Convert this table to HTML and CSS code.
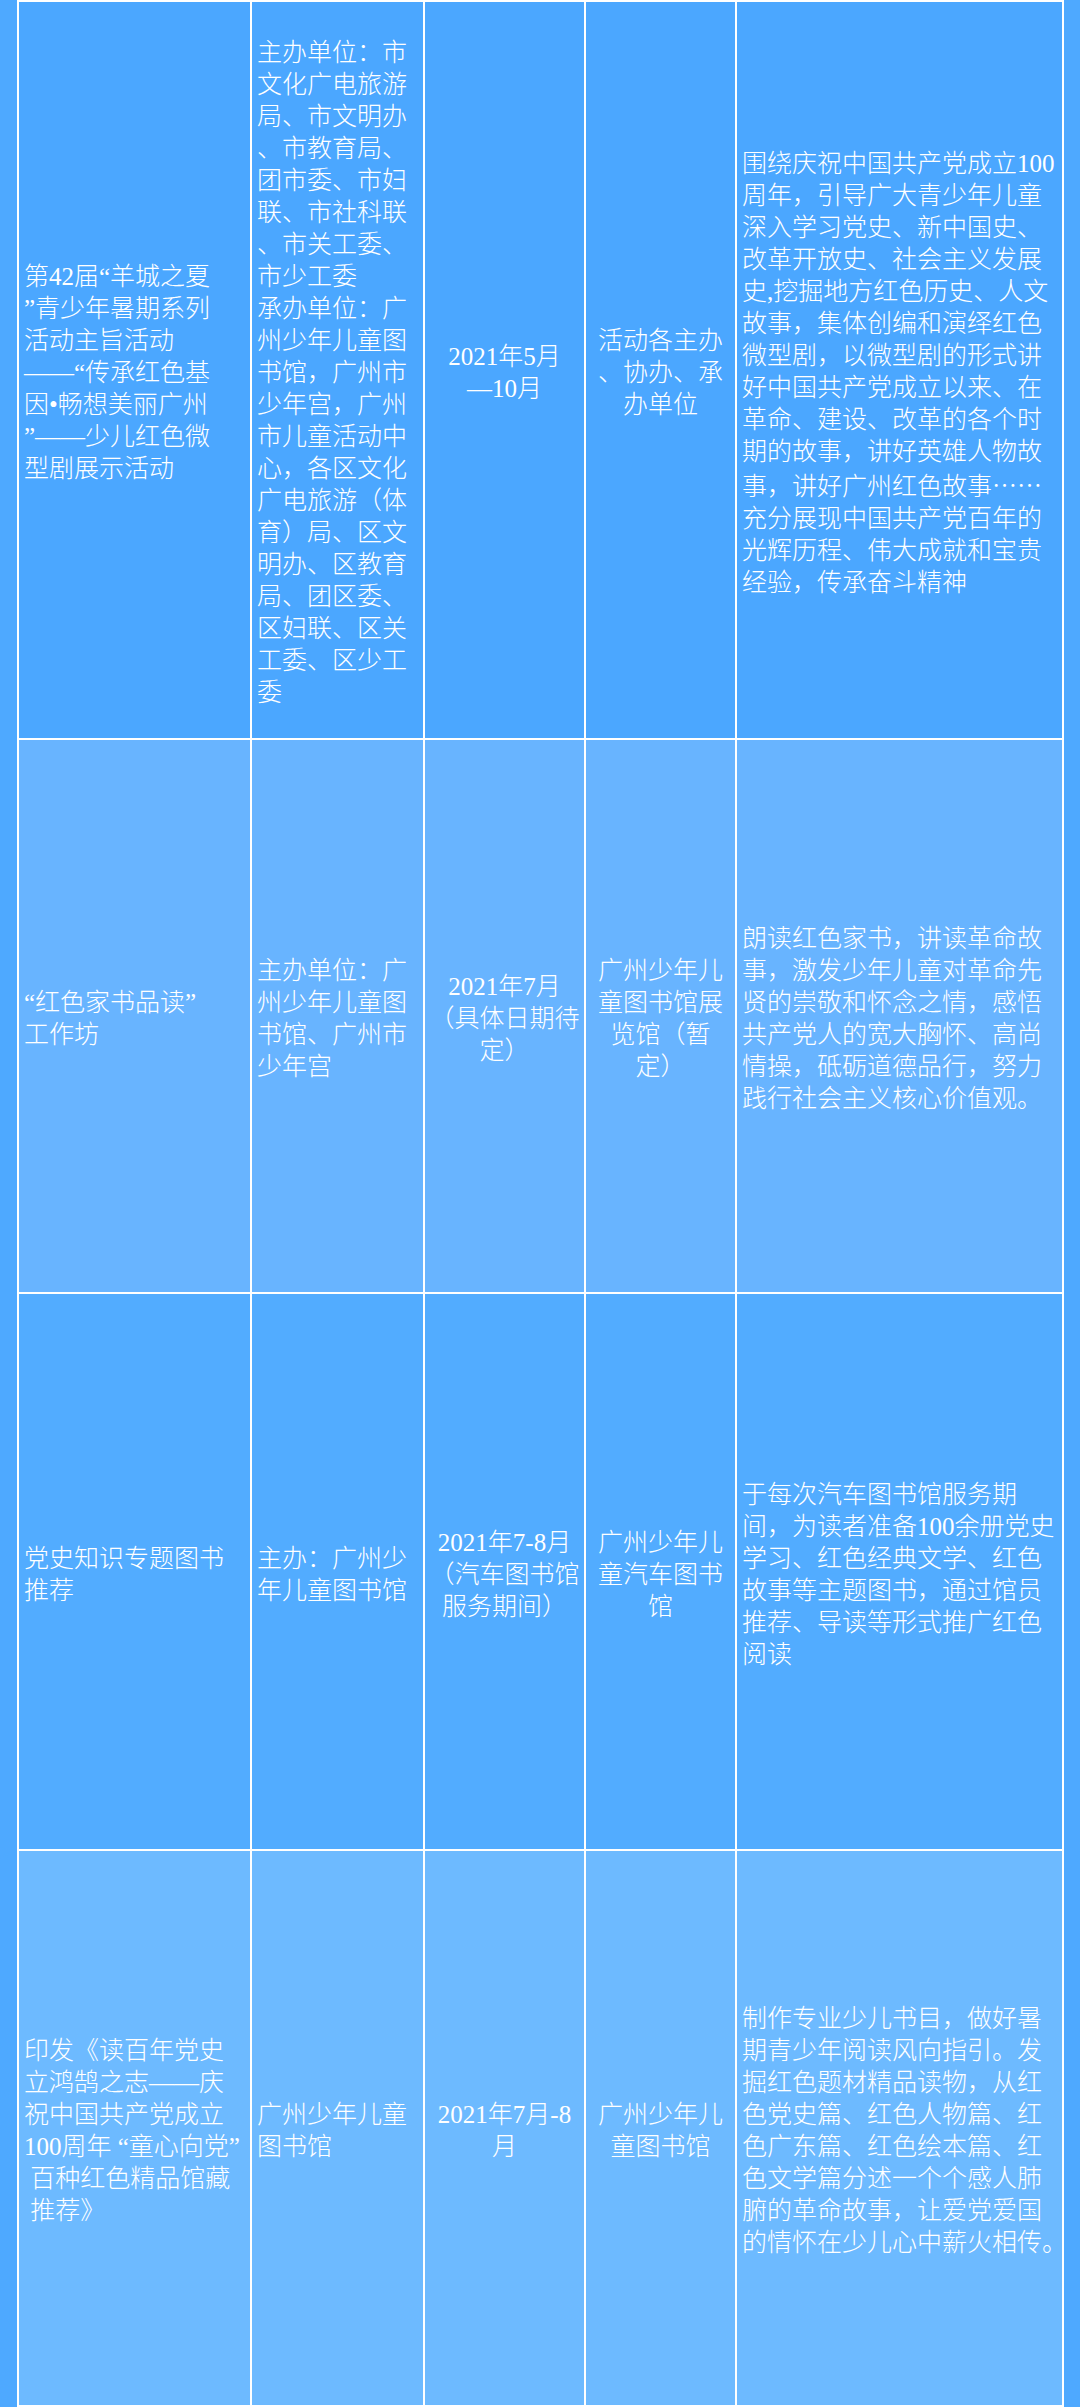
FILE: index.html
```html
<!DOCTYPE html>
<html lang="zh-CN">
<head>
<meta charset="utf-8">
<title>红色主题活动安排</title>
<link rel="stylesheet" href="styles.css">
</head>
<body>
<div class="page">
<table class="plan">
  <colgroup>
    <col class="c-name">
    <col class="c-org">
    <col class="c-time">
    <col class="c-place">
    <col class="c-desc">
  </colgroup>
  <tbody>
    <tr class="row row-1">
      <td class="left">第42届“羊城之夏<br>”青少年暑期系列<br>活动主旨活动<br>——“传承红色基<br>因•畅想美丽广州<br>”——少儿红色微<br>型剧展示活动</td>
      <td class="left">主办单位：市<br>文化广电旅游<br>局、市文明办<br>、市教育局、<br>团市委、市妇<br>联、市社科联<br>、市关工委、<br>市少工委<br>承办单位：广<br>州少年儿童图<br>书馆，广州市<br>少年宫，广州<br>市儿童活动中<br>心，各区文化<br>广电旅游（体<br>育）局、区文<br>明办、区教育<br>局、团区委、<br>区妇联、区关<br>工委、区少工<br>委</td>
      <td class="center">2021年5月<br>—10月</td>
      <td class="center">活动各主办<br>、协办、承<br>办单位</td>
      <td class="left">围绕庆祝中国共产党成立100<br>周年，引导广大青少年儿童<br>深入学习党史、新中国史、<br>改革开放史、社会主义发展<br>史,挖掘地方红色历史、人文<br>故事，集体创编和演绎红色<br>微型剧，以微型剧的形式讲<br>好中国共产党成立以来、在<br>革命、建设、改革的各个时<br>期的故事，讲好英雄人物故<br>事，讲好广州红色故事<span class="cjk">……</span><br>充分展现中国共产党百年的<br>光辉历程、伟大成就和宝贵<br>经验，传承奋斗精神</td>
    </tr>
    <tr class="row row-2">
      <td class="left">“红色家书品读”<br>工作坊</td>
      <td class="left">主办单位：广<br>州少年儿童图<br>书馆、广州市<br>少年宫</td>
      <td class="center">2021年7月<br>（具体日期待<br>定）</td>
      <td class="center">广州少年儿<br>童图书馆展<br>览馆（暂<br>定）</td>
      <td class="left">朗读红色家书，讲读革命故<br>事，激发少年儿童对革命先<br>贤的崇敬和怀念之情，感悟<br>共产党人的宽大胸怀、高尚<br>情操，砥砺道德品行，努力<br>践行社会主义核心价值观。</td>
    </tr>
    <tr class="row row-3">
      <td class="left">党史知识专题图书<br>推荐</td>
      <td class="left">主办：广州少<br>年儿童图书馆</td>
      <td class="center">2021年7-8月<br>（汽车图书馆<br>服务期间）</td>
      <td class="center">广州少年儿<br>童汽车图书<br>馆</td>
      <td class="left">于每次汽车图书馆服务期<br>间，为读者准备100余册党史<br>学习、红色经典文学、红色<br>故事等主题图书，通过馆员<br>推荐、导读等形式推广红色<br>阅读</td>
    </tr>
    <tr class="row row-4">
      <td class="left">印发《读百年党史<br>立鸿鹄之志——庆<br>祝中国共产党成立<br>100周年 “童心向党”<br>&nbsp;百种红色精品馆藏<br>&nbsp;推荐》</td>
      <td class="left">广州少年儿童<br>图书馆</td>
      <td class="center">2021年7月-8<br>月</td>
      <td class="center">广州少年儿<br>童图书馆</td>
      <td class="left">制作专业少儿书目，做好暑<br>期青少年阅读风向指引。发<br>掘红色题材精品读物，从红<br>色党史篇、红色人物篇、红<br>色广东篇、红色绘本篇、红<br>色文学篇分述一个个感人肺<br>腑的革命故事，让爱党爱国<br>的情怀在少儿心中薪火相传。</td>
    </tr>
  </tbody>
</table>
</div>
</body>
</html>
```

FILE: styles.css
```css
html, body {
  margin: 0;
  padding: 0;
}

body {
  background: #4ea9ff;
  width: 1080px;
  min-height: 2407px;
}

.page {
  padding: 0 16px 0 17px;
}

.plan {
  width: 1047px;
  table-layout: fixed;
  border-collapse: separate;
  border-spacing: 2px;
  background: #ffffff;
  font-family: "Liberation Serif", "Noto Sans CJK SC", serif;
  font-size: 25px;
  font-weight: 300;
  line-height: 32px;
  color: #ffffff;
}

.c-name { width: 231px; }
.c-org { width: 171px; }
.c-time { width: 159px; }
.c-place { width: 149px; }
.c-desc { width: 325px; }

.plan td {
  padding: 6px 4px 0 4px;
  vertical-align: middle;
  white-space: nowrap;
  overflow: visible;
}

.plan td.left {
  padding-left: 5px;
}

.left { text-align: left; }
.center { text-align: center; }

.cjk {
  font-family: "Noto Sans CJK SC", sans-serif;
}

.row-1 { height: 736px; }
.row-2 { height: 552px; }
.row-3 { height: 555px; }
.row-4 { height: 554px; }

.row-1 td { background: #4ba7ff; }
.row-2 td { background: #68b4ff; }
.row-3 td { background: #52acff; }
.row-4 td { background: #6dbaff; }
```
